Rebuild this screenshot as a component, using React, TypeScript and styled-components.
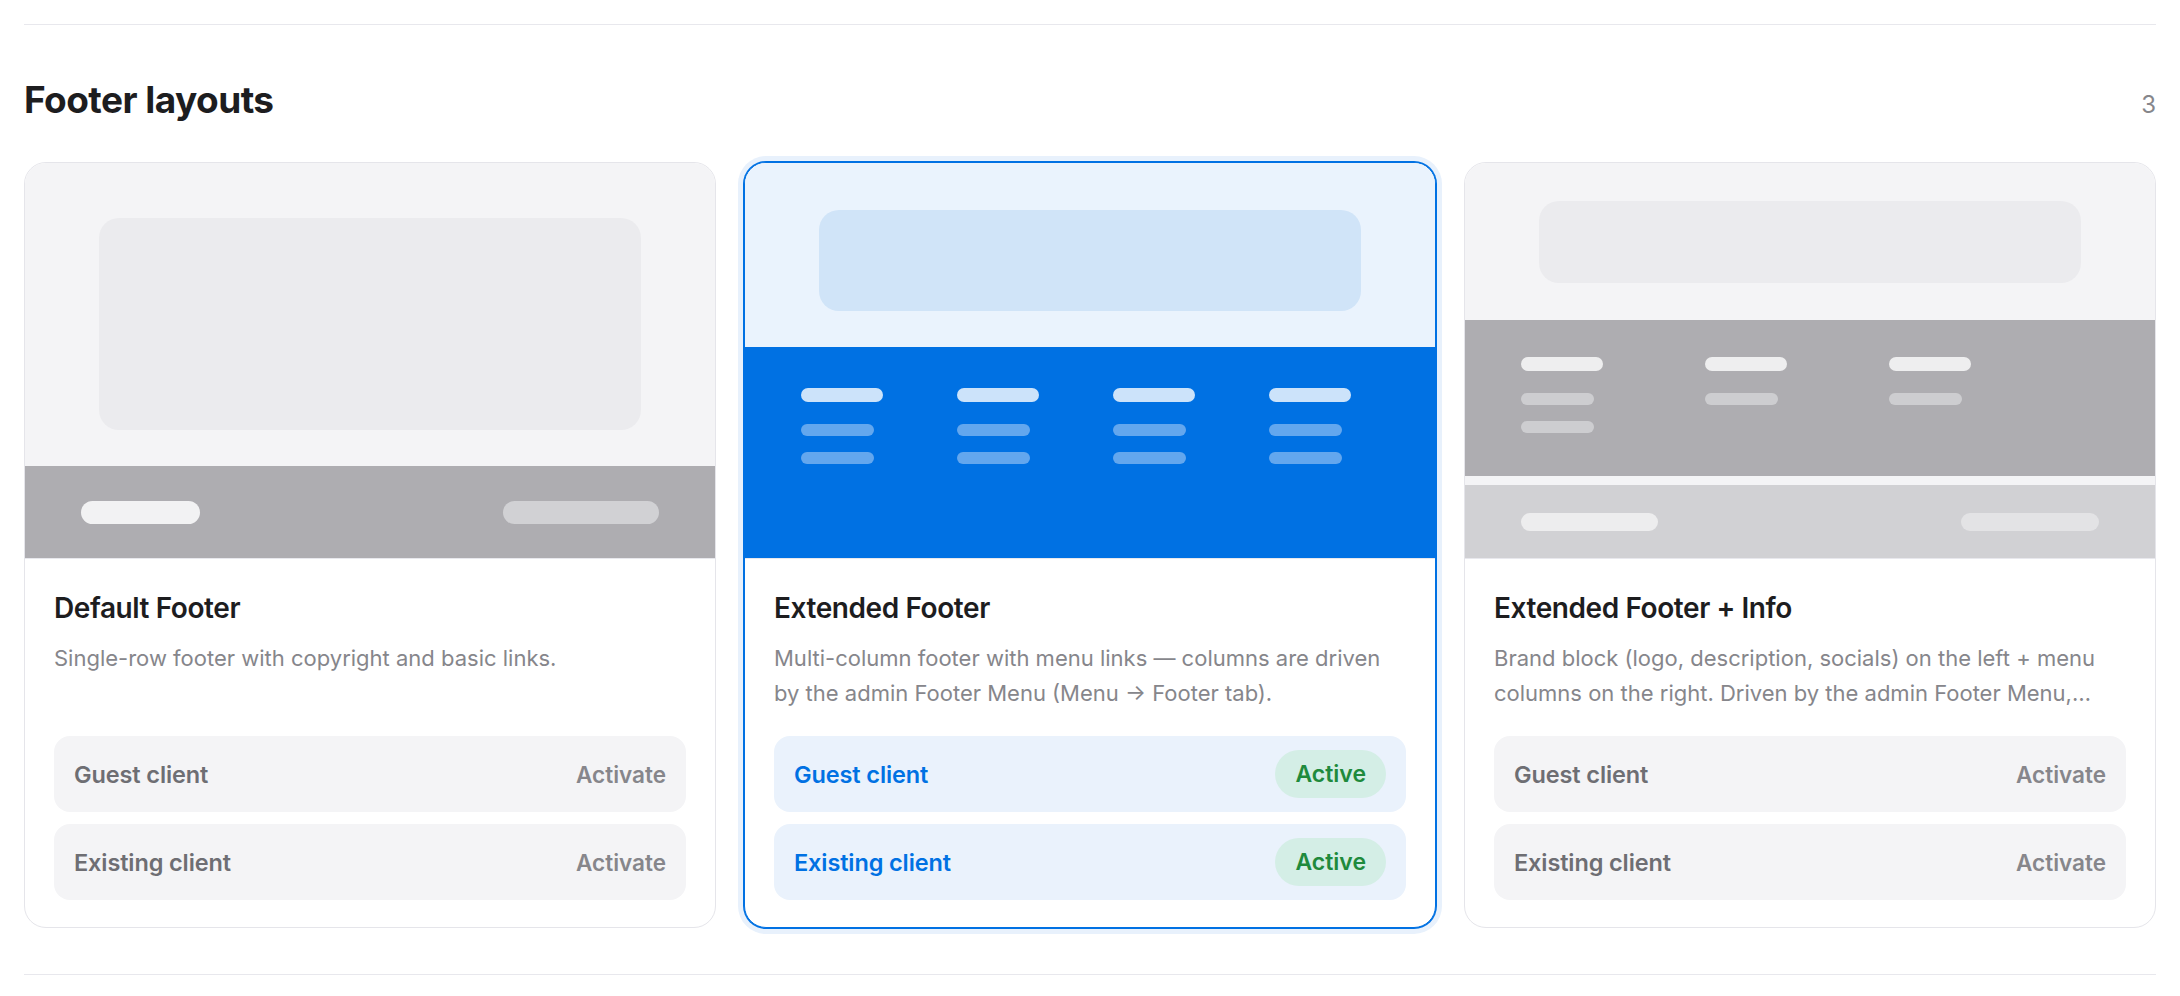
import React from "react";
import styled, { createGlobalStyle, css } from "styled-components";

const GlobalStyle = createGlobalStyle`
  *, *::before, *::after { box-sizing: border-box; }
  html, body { margin: 0; padding: 0; background: #ffffff; }
  body {
    font-family: Inter, "Noto Sans", "Liberation Sans", sans-serif;
    color: #1d1d1f;
    -webkit-font-smoothing: antialiased;
  }
`;

const Page = styled.div`
  padding: 24px 24px 0;
`;

const Section = styled.section`
  border-top: 1px solid #e8e8ed;
  border-bottom: 1px solid #e8e8ed;
  padding: 53px 0 46px;
`;

const SectionHeader = styled.header`
  display: flex;
  align-items: baseline;
  justify-content: space-between;
  margin-bottom: 40px;
`;

const SectionTitle = styled.h2`
  margin: 0;
  font-size: 37px;
  line-height: 44px;
  font-weight: 700;
  letter-spacing: -0.015em;
  color: #1d1d1f;
`;

const Count = styled.span`
  font-size: 24px;
  line-height: 29px;
  color: #86868b;
`;

const Grid = styled.div`
  display: grid;
  grid-template-columns: repeat(3, 1fr);
  gap: 28px;
`;

const Card = styled.article<{ $selected?: boolean }>`
  display: flex;
  flex-direction: column;
  border: 1px solid #e5e5ea;
  border-radius: 22px;
  overflow: hidden;
  background: #ffffff;
  ${(p) =>
    p.$selected &&
    css`
      border-color: #0071e3;
      box-shadow: 0 0 0 1px #0071e3, 0 0 0 6px #e8f1fc;
    `}
`;

/* ---------- layout thumbnails ---------- */

type Tone = "gray" | "blue";

const Preview = styled.div`
  display: flex;
  flex-direction: column;
  height: 396px;
  border-bottom: 1px solid #e8e8ed;
`;

const PreviewTop = styled.div<{ $tone: Tone; $h: number; $pad: string }>`
  height: ${(p) => p.$h}px;
  padding: ${(p) => p.$pad};
  display: flex;
  background: ${(p) => (p.$tone === "blue" ? "#eaf3fd" : "#f4f4f6")};
`;

const ContentBlock = styled.div<{ $tone: Tone }>`
  flex: 1;
  border-radius: 20px;
  background: ${(p) => (p.$tone === "blue" ? "#d0e4f8" : "#ebebee")};
`;

const BarRow = styled.div<{ $bg: string; $h: number }>`
  height: ${(p) => p.$h}px;
  background: ${(p) => p.$bg};
  display: flex;
  align-items: center;
  justify-content: space-between;
  padding: 0 56px;
`;

const Pill = styled.div<{ $w: number; $h: number; $c: string }>`
  width: ${(p) => p.$w}px;
  height: ${(p) => p.$h}px;
  border-radius: ${(p) => p.$h / 2}px;
  background: ${(p) => p.$c};
`;

const ColumnsBand = styled.div<{ $bg: string; $h: number; $padTop: number; $gap: number }>`
  height: ${(p) => p.$h}px;
  background: ${(p) => p.$bg};
  padding: ${(p) => p.$padTop}px 56px 0;
  display: flex;
  align-items: flex-start;
  gap: ${(p) => p.$gap}px;
`;

const MenuColumn = styled.div`
  display: flex;
  flex-direction: column;
  align-items: flex-start;
`;

const MenuHead = styled.div<{ $c: string }>`
  width: 82px;
  height: 14px;
  border-radius: 7px;
  background: ${(p) => p.$c};
  margin-bottom: 22px;
`;

const MenuLink = styled.div<{ $c: string }>`
  width: 73px;
  height: 12px;
  border-radius: 6px;
  background: ${(p) => p.$c};
  & + & {
    margin-top: 16px;
  }
`;

const Strip = styled.div`
  height: 9px;
  background: #f4f4f6;
`;

const DefaultPreview = () => (
  <Preview>
    <PreviewTop $tone="gray" $h={303} $pad="55px 74px 36px">
      <ContentBlock $tone="gray" />
    </PreviewTop>
    <BarRow $bg="#aeadb1" $h={92}>
      <Pill $w={119} $h={23} $c="#f2f2f3" />
      <Pill $w={156} $h={23} $c="#d1d1d4" />
    </BarRow>
  </Preview>
);

const ExtendedPreview = () => (
  <Preview>
    <PreviewTop $tone="blue" $h={184} $pad="47px 74px 36px">
      <ContentBlock $tone="blue" />
    </PreviewTop>
    <ColumnsBand $bg="#0071e3" $h={211} $padTop={41} $gap={74}>
      {[0, 1, 2, 3].map((i) => (
        <MenuColumn key={i}>
          <MenuHead $c="#cce3fa" />
          <MenuLink $c="#63a7ee" />
          <MenuLink $c="#63a7ee" />
        </MenuColumn>
      ))}
    </ColumnsBand>
  </Preview>
);

const InfoPreview = () => (
  <Preview>
    <PreviewTop $tone="gray" $h={157} $pad="38px 74px 37px">
      <ContentBlock $tone="gray" />
    </PreviewTop>
    <ColumnsBand $bg="#aeadb1" $h={156} $padTop={37} $gap={102}>
      {[2, 1, 1].map((links, i) => (
        <MenuColumn key={i}>
          <MenuHead $c="#eeeeef" />
          {Array.from({ length: links }).map((_, j) => (
            <MenuLink key={j} $c="#cdcdd0" />
          ))}
        </MenuColumn>
      ))}
    </ColumnsBand>
    <Strip />
    <BarRow $bg="#d1d1d4" $h={73}>
      <Pill $w={137} $h={18} $c="#ededee" />
      <Pill $w={138} $h={18} $c="#e3e3e5" />
    </BarRow>
  </Preview>
);

/* ---------- card body ---------- */

const Body = styled.div`
  display: flex;
  flex-direction: column;
  padding: 32px 29px 27px;
`;

const CardTitle = styled.h3`
  margin: 0;
  font-size: 28px;
  line-height: 34px;
  font-weight: 600;
  letter-spacing: -0.015em;
  color: #1d1d1f;
`;

const Description = styled.p`
  margin: 16px 0 0;
  padding-right: 6px;
  font-size: 22px;
  line-height: 35.2px;
  height: 70.4px;
  color: #86868b;
  display: -webkit-box;
  -webkit-line-clamp: 2;
  -webkit-box-orient: vertical;
  overflow: hidden;
`;

const Targets = styled.div`
  display: flex;
  flex-direction: column;
  gap: 12px;
  margin-top: 25px;
`;

const TargetRow = styled.div<{ $active?: boolean }>`
  height: 76px;
  display: flex;
  align-items: center;
  justify-content: space-between;
  padding: 0 20px;
  border-radius: 16px;
  background: ${(p) => (p.$active ? "#eaf2fc" : "#f4f4f6")};
`;

const TargetLabel = styled.span<{ $active?: boolean }>`
  font-size: 23.5px;
  font-weight: 600;
  letter-spacing: -0.005em;
  color: ${(p) => (p.$active ? "#0071e3" : "#6e6e73")};
`;

const ActivateButton = styled.button`
  border: 0;
  background: none;
  padding: 0;
  font: inherit;
  font-size: 22.5px;
  font-weight: 600;
  color: #86868b;
  cursor: pointer;
`;

const ActiveBadge = styled.span`
  height: 48px;
  display: inline-flex;
  align-items: center;
  padding: 0 20px;
  border-radius: 24px;
  background: #d4eee6;
  color: #1f8a3c;
  font-size: 23px;
  font-weight: 600;
`;

type Layout = {
  id: string;
  title: string;
  description: string;
  preview: React.ReactNode;
  active: boolean;
};

const layouts: Layout[] = [
  {
    id: "default",
    title: "Default Footer",
    description: "Single-row footer with copyright and basic links.",
    preview: <DefaultPreview />,
    active: false,
  },
  {
    id: "extended",
    title: "Extended Footer",
    description:
      "Multi-column footer with menu links — columns are driven by the admin Footer Menu (Menu → Footer tab).",
    preview: <ExtendedPreview />,
    active: true,
  },
  {
    id: "extended-info",
    title: "Extended Footer + Info",
    description:
      "Brand block (logo, description, socials) on the left + menu columns on the right. Driven by the admin Footer Menu, configurable from Settings → Branding.",
    preview: <InfoPreview />,
    active: false,
  },
];

const audiences = ["Guest client", "Existing client"];

export default function App() {
  return (
    <>
      <GlobalStyle />
      <Page>
        <Section>
          <SectionHeader>
            <SectionTitle>Footer layouts</SectionTitle>
            <Count>{layouts.length}</Count>
          </SectionHeader>
          <Grid>
            {layouts.map((layout) => (
              <Card key={layout.id} $selected={layout.active}>
                {layout.preview}
                <Body>
                  <CardTitle>{layout.title}</CardTitle>
                  <Description>{layout.description}</Description>
                  <Targets>
                    {audiences.map((a) => (
                      <TargetRow key={a} $active={layout.active}>
                        <TargetLabel $active={layout.active}>{a}</TargetLabel>
                        {layout.active ? (
                          <ActiveBadge>Active</ActiveBadge>
                        ) : (
                          <ActivateButton type="button">Activate</ActivateButton>
                        )}
                      </TargetRow>
                    ))}
                  </Targets>
                </Body>
              </Card>
            ))}
          </Grid>
        </Section>
      </Page>
    </>
  );
}
